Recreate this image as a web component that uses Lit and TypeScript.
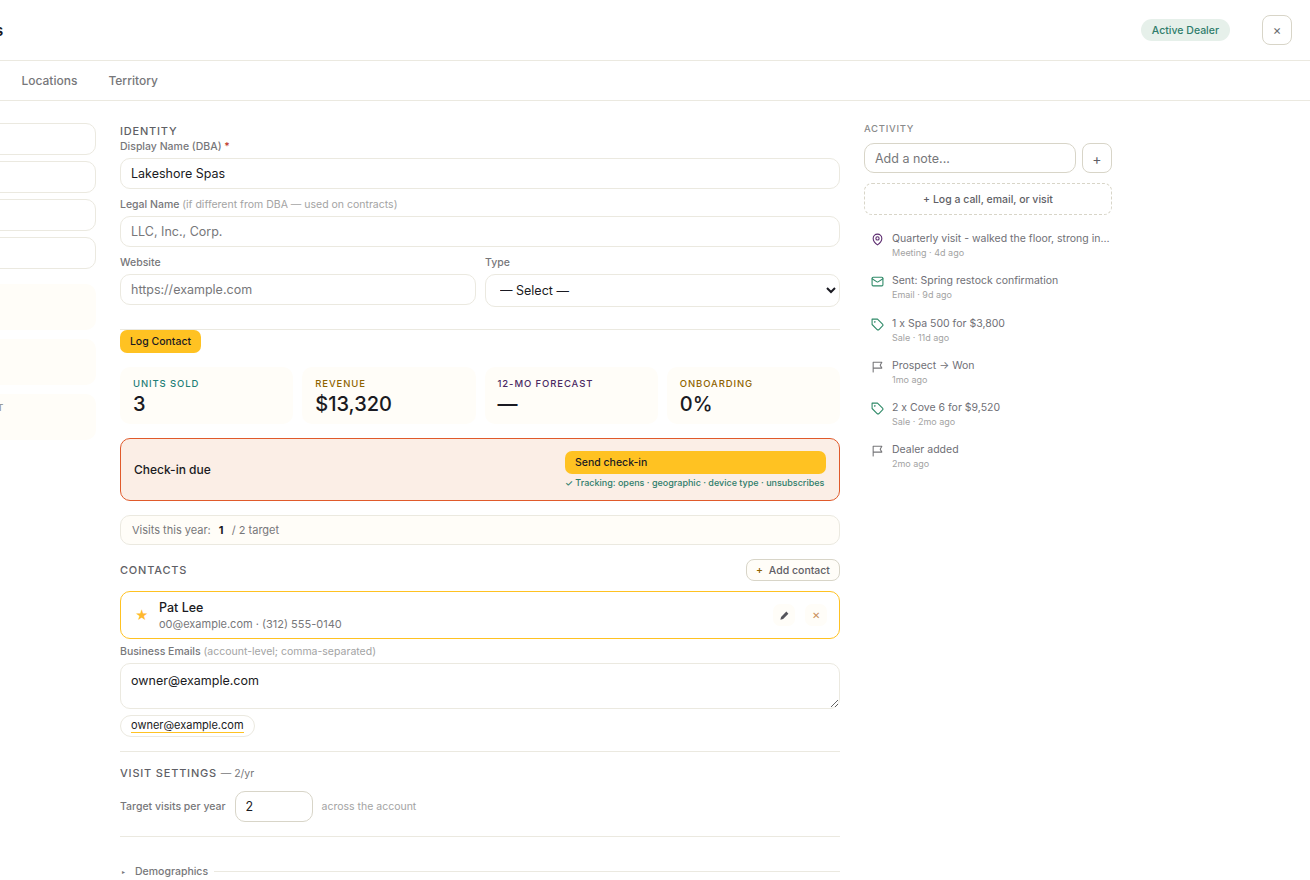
import { LitElement, html, css, svg } from 'lit';
import { customElement } from 'lit/decorators.js';

const ICONS: Record<string, unknown> = {
  pin: svg`<path d="M20 10c0 6-8 12-8 12s-8-6-8-12a8 8 0 0 1 16 0Z"/><circle cx="12" cy="10" r="3"/>`,
  mail: svg`<rect x="2" y="4" width="20" height="16" rx="2"/><path d="m22 7-8.97 5.7a1.94 1.94 0 0 1-2.06 0L2 7"/>`,
  tag: svg`<path d="M12 2H2v10l9.29 9.29c.94.94 2.48.94 3.42 0l6.58-6.58c.94-.94.94-2.48 0-3.42L12 2Z"/><circle cx="7" cy="7" r=".6"/>`,
  flag: svg`<path d="M4 22V4h16l-3 5.5 3 5.5H4"/>`,
};

const ACTIVITY = [
  { icon: 'pin', color: '#5b2a6e', title: 'Quarterly visit - walked the floor, strong interest in Cove line', meta: 'Meeting · 4d ago' },
  { icon: 'mail', color: '#2f8a68', title: 'Sent: Spring restock confirmation', meta: 'Email · 9d ago' },
  { icon: 'tag', color: '#2f8a68', title: '1 x Spa 500 for $3,800', meta: 'Sale · 11d ago' },
  { icon: 'flag', color: '#77777a', title: 'Prospect → Won', meta: '1mo ago' },
  { icon: 'tag', color: '#2f8a68', title: '2 x Cove 6 for $9,520', meta: 'Sale · 2mo ago' },
  { icon: 'flag', color: '#77777a', title: 'Dealer added', meta: '2mo ago' },
];

const STATS = [
  { label: 'UNITS SOLD', value: '3', color: '#1f7f78' },
  { label: 'REVENUE', value: '$13,320', color: '#8f6400' },
  { label: '12-MO FORECAST', value: '—', color: '#4b2a63' },
  { label: 'ONBOARDING', value: '0%', color: '#8f6400' },
];

@customElement('app-root')
export class AppRoot extends LitElement {
  static styles = css`
    :host {
      display: block;
      height: 880px;
      overflow: hidden;
      background: #fff;
      font-family: Inter, 'Liberation Sans', sans-serif;
      color: #1a1a22;
    }
    * { box-sizing: border-box; }
    .sheet { width: 1430px; margin-left: -120px; }
    header {
      height: 61px;
      border-bottom: 1px solid #ebe9e0;
      display: flex;
      align-items: center;
      padding: 0 18px 0 8px;
    }
    h1 { margin: 0; font-size: 15px; font-weight: 600; flex: 1; }
    .badge {
      height: 22px;
      padding: 0 11px;
      border-radius: 11px;
      background: #e6f0ea;
      color: #2f7d6b;
      font-size: 10.5px;
      font-weight: 500;
      display: flex;
      align-items: center;
      margin-right: 32px;
    }
    .close {
      width: 30px;
      height: 30px;
      border: 1px solid #d8d5c8;
      border-radius: 8px;
      background: #fff;
      color: #6b6b70;
      font: 13px Inter, sans-serif;
      padding: 0;
    }
    nav {
      height: 40px;
      border-bottom: 1px solid #ebe9e0;
      display: flex;
      align-items: center;
      justify-content: flex-start;
      gap: 31px;
      padding-left: 56px;
      font-size: 12px;
      font-weight: 500;
      color: #77777a;
    }
    .body {
      display: grid;
      grid-template-columns: 216px 720px 248px;
      gap: 24px;
      padding-top: 22px;
    }
    .side { display: flex; flex-direction: column; }
    .side .fake {
      height: 32px;
      border: 1px solid #ebe9e0;
      border-radius: 10px;
      margin-bottom: 6px;
    }
    .side .card {
      height: 46px;
      border-radius: 10px;
      background: #fffdf8;
      margin-bottom: 9px;
      font-size: 9.5px;
      font-weight: 600;
      letter-spacing: 0.8px;
      color: #9a9a9a;
      text-align: right;
      padding: 8px 92px 0 0;
    }
    .side .card.first { margin-top: 9px; }
    .section-title {
      font-size: 11px;
      font-weight: 500;
      letter-spacing: 0.8px;
      color: #5f5f66;
      line-height: 14px;
    }
    label, .label {
      display: block;
      font-size: 10.5px;
      font-weight: 500;
      color: #77777a;
      line-height: 14px;
    }
    .label em { font-style: normal; font-weight: 400; color: #a3a3a3; }
    .req { color: #c0392b; }
    input, select, textarea {
      font-family: Inter, sans-serif;
      font-size: 12.5px;
      color: #1a1a22;
      border: 1px solid #ebe9e0;
      border-radius: 10px;
      background: #fff;
      padding: 0 10px;
      width: 100%;
      display: block;
      outline: none;
    }
    input { height: 31px; }
    select { height: 33px; }
    input::placeholder, textarea::placeholder { color: #77777a; }
    .identity-title { margin-top: 1px; }
    .field-1 { margin-top: 2px; }
    .field-1 label { margin-bottom: 4px; }
    .field-2 { margin-top: 9px; }
    .field-2 label { margin-bottom: 4px; }
    .two {
      display: grid;
      grid-template-columns: 356px 355px;
      gap: 9px;
      margin-top: 9px;
    }
    .two label { margin-bottom: 4px; }
    hr {
      border: 0;
      border-top: 1px solid #ebe9e0;
      margin: 0;
    }
    .rule-top { margin-top: 22px; }
    .log {
      display: block;
      height: 23px;
      width: 81px;
      padding: 0;
      border: 0;
      border-radius: 7px;
      background: #ffc222;
      font: 500 10.5px Inter, sans-serif;
      color: #1a1a22;
    }
    .stats {
      display: grid;
      grid-template-columns: repeat(4, 1fr);
      gap: 9px;
      margin-top: 14px;
    }
    .stat {
      height: 57px;
      border-radius: 10px;
      background: #fffdf8;
      padding: 11px 13px 0;
    }
    .stat .k {
      font-size: 9.5px;
      font-weight: 500;
      letter-spacing: 0.9px;
      line-height: 12px;
    }
    .stat .v { font-size: 20px; font-weight: 500; line-height: 26px; margin-top: 1px; }
    .alert {
      height: 63px;
      margin-top: 14px;
      border: 1px solid #e05a2b;
      border-radius: 10px;
      background: #fbeee6;
      display: flex;
      align-items: center;
      justify-content: space-between;
      padding: 0 13px;
      font-size: 12px;
      font-weight: 500;
    }
    .alert-side { width: 261px; }
    .send {
      display: block;
      width: 100%;
      height: 23px;
      padding: 0 10px;
      border: 0;
      border-radius: 7px;
      background: #ffc222;
      text-align: left;
      font: 500 10.5px Inter, sans-serif;
      color: #1a1a22;
    }
    .tracking {
      margin-top: 3px;
      font-size: 9px;
      line-height: 12px;
      color: #2f7d6b;
      white-space: nowrap;
    }
    .visits {
      height: 30px;
      margin-top: 14px;
      border: 1px solid #ebe9e0;
      border-radius: 10px;
      background: #fffdf8;
      display: flex;
      align-items: center;
      padding: 0 11px;
      font-size: 11px;
      color: #77777a;
      white-space: pre;
    }
    .visits b { color: #1a1a22; font-weight: 700; margin: 0 5px; }
    .contacts-head {
      height: 22px;
      margin-top: 14px;
      display: flex;
      align-items: center;
      justify-content: space-between;
    }
    .add {
      width: 94px;
      height: 22px;
      padding: 0;
      border: 1px solid #d8d5c8;
      border-radius: 8px;
      background: #fffdf8;
      font: 500 10.5px Inter, sans-serif;
      color: #5f5f66;
    }
    .add span { color: #8f6400; margin-right: 3px; }
    .contact {
      height: 48px;
      margin-top: 10px;
      border: 1px solid #ffc222;
      border-radius: 10px;
      display: flex;
      align-items: center;
      padding: 0 12px 0 14px;
    }
    .star { color: #ffb92e; font-size: 13px; width: 24px; }
    .who { flex: 1; }
    .who .n { font-size: 12.5px; font-weight: 500; line-height: 16px; }
    .who .d { font-size: 11px; line-height: 14px; color: #77777a; margin-top: 1px; }
    .tool {
      width: 22px;
      height: 22px;
      border-radius: 7px;
      background: #fffdf8;
      display: flex;
      align-items: center;
      justify-content: center;
      margin-left: 10px;
      font-size: 10px;
      color: #c98f5a;
    }
    .tool svg { width: 11px; height: 11px; }
    .emails { margin-top: 6px; }
    .emails label { margin-bottom: 4px; }
    textarea { height: 46px; padding: 9px 10px; line-height: 16px; resize: vertical; }
    .chip {
      display: inline-flex;
      align-items: center;
      height: 22px;
      margin-top: 6px;
      padding: 0 10px;
      border: 1px solid #ebe9e0;
      border-radius: 11px;
      font-size: 11px;
    }
    .chip span { border-bottom: 1px solid #ffc222; line-height: 13px; }
    .rule-visit { margin-top: 14px; }
    .visit-title { margin-top: 14px; }
    .visit-title em { font-style: normal; font-weight: 400; letter-spacing: 0; font-size: 10.5px; color: #77777a; }
    .target {
      display: flex;
      align-items: center;
      margin-top: 10px;
      font-size: 10.5px;
      color: #77777a;
    }
    .target b { font-weight: 500; }
    .target input {
      width: 78px;
      margin: 0 9px;
      border-color: #d8d5c8;
    }
    .target span { color: #a3a3a3; }
    .rule-demo { margin-top: 14px; }
    .demo {
      display: flex;
      align-items: center;
      gap: 6px;
      margin-top: 28px;
      font-size: 10.5px;
      font-weight: 500;
      color: #77777a;
    }
    .demo i { flex: 1; border-top: 1px solid #ebe9e0; }
    .demo small { font-size: 6px; margin: 0 4px 0 2px; }
    .activity .head {
      font-size: 9.5px;
      font-weight: 500;
      letter-spacing: 0.7px;
      color: #8a8a8a;
      line-height: 12px;
    }
    .note { display: flex; gap: 6px; margin-top: 8px; }
    .note input { height: 30px; border-color: #d8d5c8; flex: 1; min-width: 0; }
    .note button {
      width: 30px;
      height: 30px;
      flex: none;
      border: 1px solid #d8d5c8;
      border-radius: 8px;
      background: #fff;
      font: 14px Inter, sans-serif;
      color: #5f5f66;
      padding: 0;
    }
    .logit {
      display: block;
      width: 100%;
      height: 32px;
      margin-top: 10px;
      border: 1px dashed #d8d5c8;
      border-radius: 8px;
      background: #fff;
      font: 500 10.5px Inter, sans-serif;
      color: #5f5f66;
    }
    .feed { margin: 17px 0 0; padding: 0 0 0 7px; list-style: none; }
    .feed li { display: flex; gap: 8px; height: 42.3px; }
    .feed svg {
      width: 13px;
      height: 13px;
      flex: none;
      margin-top: 1px;
      fill: none;
      stroke-width: 2;
      stroke-linecap: round;
      stroke-linejoin: round;
    }
    .feed .txt { min-width: 0; flex: 1; }
    .feed .t {
      font-size: 10.5px;
      line-height: 14px;
      color: #6f6f76;
      white-space: nowrap;
      overflow: hidden;
      text-overflow: ellipsis;
    }
    .feed .m { font-size: 9px; line-height: 12px; color: #a3a3a3; margin-top: 1px; }
  `;

  render() {
    return html`
      <div class="sheet">
        <header>
          <h1>Lakeshore Spas</h1>
          <div class="badge">Active Dealer</div>
          <button class="close">×</button>
        </header>
        <nav><span>Overview</span><span>Locations</span><span>Territory</span></nav>
        <div class="body">
          <div class="side">
            <div class="fake"></div><div class="fake"></div><div class="fake"></div><div class="fake"></div>
            <div class="card first"></div>
            <div class="card"></div>
            <div class="card">ACCOUNT</div>
          </div>
          <main>
            <div class="section-title identity-title">IDENTITY</div>
            <div class="field-1">
              <label>Display Name (DBA) <span class="req">*</span></label>
              <input value="Lakeshore Spas" />
            </div>
            <div class="field-2">
              <label class="label">Legal Name <em>(if different from DBA — used on contracts)</em></label>
              <input placeholder="LLC, Inc., Corp." />
            </div>
            <div class="two">
              <div><label>Website</label><input placeholder="https://example.com" /></div>
              <div><label>Type</label><select><option>— Select —</option></select></div>
            </div>
            <hr class="rule-top" />
            <button class="log">Log Contact</button>
            <div class="stats">
              ${STATS.map(
                (s) => html`<div class="stat">
                  <div class="k" style="color:${s.color}">${s.label}</div>
                  <div class="v">${s.value}</div>
                </div>`
              )}
            </div>
            <div class="alert">
              <div>Check-in due</div>
              <div class="alert-side">
                <button class="send">Send check-in</button>
                <div class="tracking">✓ Tracking: opens · geographic · device type · unsubscribes</div>
              </div>
            </div>
            <div class="visits">Visits this year: <b>1</b> / 2 target</div>
            <div class="contacts-head">
              <div class="section-title">CONTACTS</div>
              <button class="add"><span>+</span> Add contact</button>
            </div>
            <div class="contact">
              <div class="star">★</div>
              <div class="who">
                <div class="n">Pat Lee</div>
                <div class="d">o0@example.com · (312) 555-0140</div>
              </div>
              <div class="tool">
                <svg viewBox="0 0 24 24" fill="#55555c"><path d="M3 21l1.5-6L16 3.5l4.5 4.5L9 19.5z"/></svg>
              </div>
              <div class="tool">✕</div>
            </div>
            <div class="emails">
              <label class="label">Business Emails <em>(account-level; comma-separated)</em></label>
              <textarea>owner@example.com</textarea>
            </div>
            <div class="chip"><span>owner@example.com</span></div>
            <hr class="rule-visit" />
            <div class="section-title visit-title">VISIT SETTINGS <em>— 2/yr</em></div>
            <div class="target">
              <b>Target visits per year</b>
              <input value="2" />
              <span>across the account</span>
            </div>
            <hr class="rule-demo" />
            <div class="demo"><small>▸</small>Demographics<i></i></div>
          </main>
          <aside class="activity">
            <div class="head">ACTIVITY</div>
            <div class="note"><input placeholder="Add a note..." /><button>+</button></div>
            <button class="logit">+ Log a call, email, or visit</button>
            <ul class="feed">
              ${ACTIVITY.map(
                (a) => html`<li>
                  <svg viewBox="0 0 24 24" stroke=${a.color}>${ICONS[a.icon]}</svg>
                  <div class="txt">
                    <div class="t">${a.title}</div>
                    <div class="m">${a.meta}</div>
                  </div>
                </li>`
              )}
            </ul>
          </aside>
        </div>
      </div>
    `;
  }
}
